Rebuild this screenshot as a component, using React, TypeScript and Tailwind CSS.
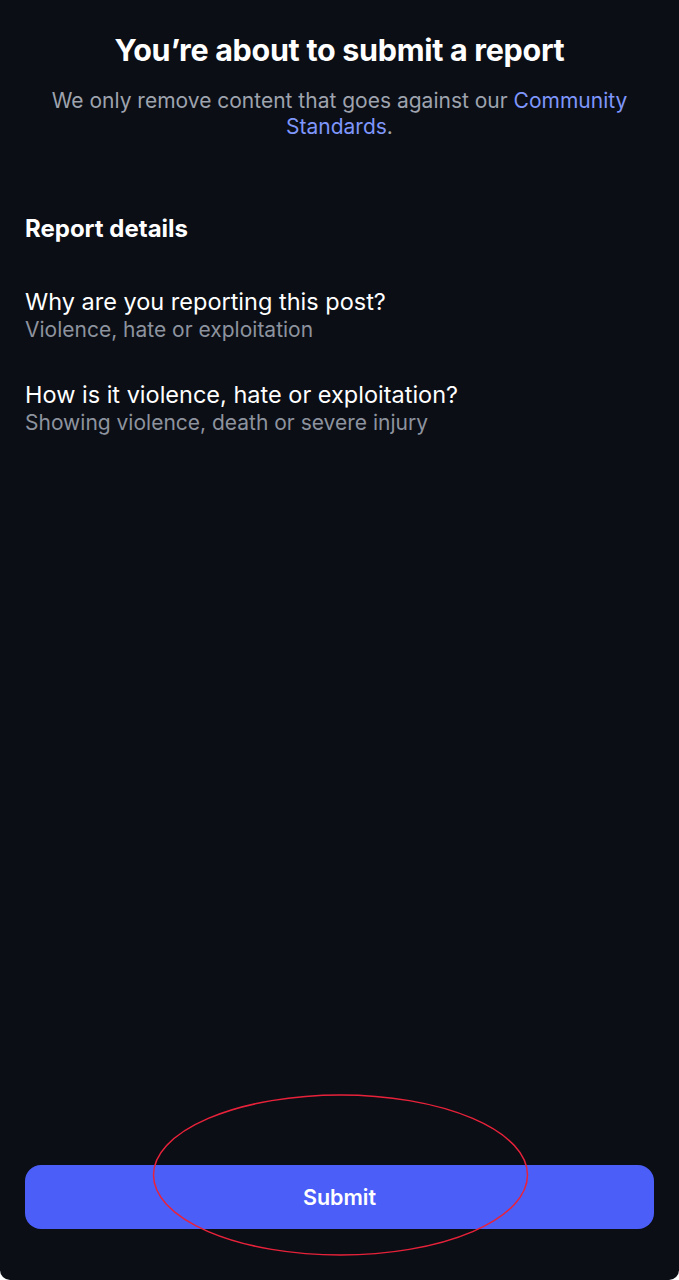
export default function App() {
  const font = { fontFamily: "Inter, 'Noto Sans', sans-serif" };
  return (
    <div className="bg-white" style={font}>
      <div className="relative flex h-[1280px] w-[679px] flex-col overflow-hidden rounded-b-[10px] bg-[#0b0e15] px-[25px]">
        {/* Header */}
        <div className="pt-[31px] text-center">
          <h1 className="text-[30.5px] font-bold leading-[38px] tracking-[-0.3px] text-white">
            You’re about to submit a report
          </h1>
          <p className="mx-auto mt-[19px] max-w-[620px] text-[21px] leading-[26px] text-[#9ea3ae]">
            We only remove content that goes against our{" "}
            <span className="text-[#7f96fb]">Community</span>{" "}
            <span className="text-[#7f96fb]">Standards</span>.
          </p>
        </div>

        {/* Details */}
        <h2 className="mt-[74px] text-[24px] font-bold leading-[30px] text-white">
          Report details
        </h2>

        <div className="mt-[43px] flex flex-col gap-[37px]">
          <div>
            <p className="text-[23.5px] leading-[30px] text-white">
              Why are you reporting this post?
            </p>
            <p className="text-[21px] leading-[26px] text-[#8d939e]">
              Violence, hate or exploitation
            </p>
          </div>
          <div>
            <p className="text-[23.5px] leading-[30px] text-white">
              How is it violence, hate or exploitation?
            </p>
            <p className="text-[21px] leading-[26px] text-[#8d939e]">
              Showing violence, death or severe injury
            </p>
          </div>
        </div>

        {/* Footer */}
        <div className="mt-auto pb-[51px]">
          <button className="flex h-[64px] w-full items-center justify-center rounded-[16px] bg-[#4b5ef8] text-[21.5px] font-semibold text-white">
            Submit
          </button>
        </div>

        {/* annotation */}
        <svg
          className="pointer-events-none absolute left-0 top-0"
          width="679"
          height="1280"
          viewBox="0 0 679 1280"
        >
          <ellipse
            cx="340.5"
            cy="1175"
            rx="187"
            ry="80"
            fill="none"
            stroke="#e8223a"
            strokeWidth="1.5"
          />
        </svg>
      </div>
    </div>
  );
}
